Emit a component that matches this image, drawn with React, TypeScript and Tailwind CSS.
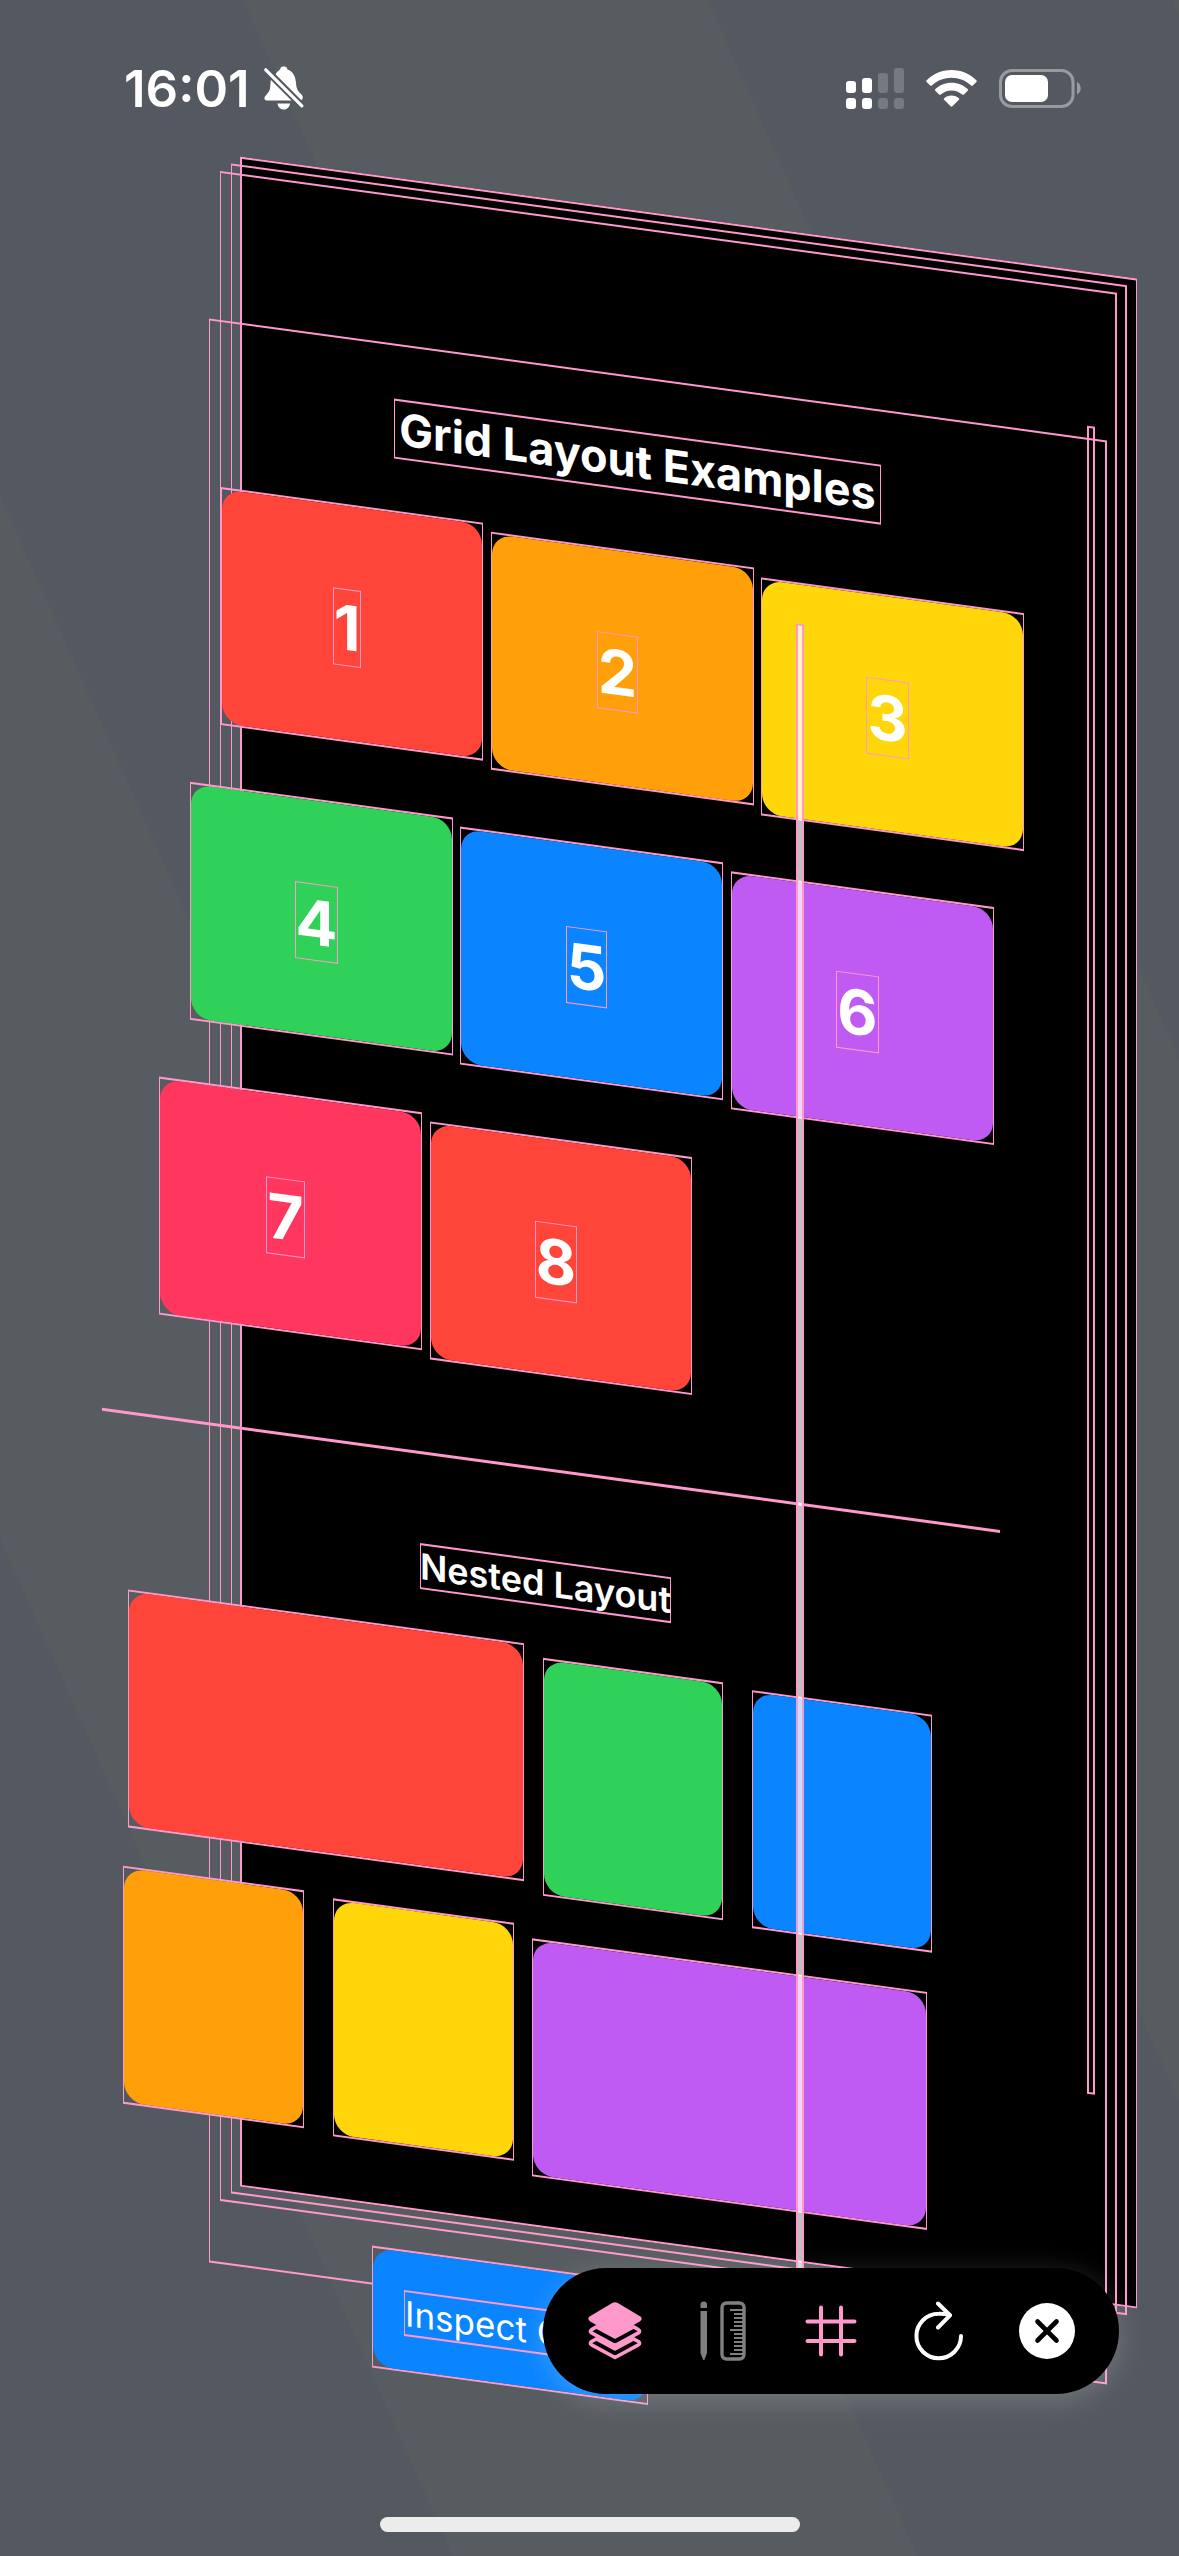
import React from "react";

type Box = { x: number; y: number; w: number; h: number };

const at = ({ x, y, w, h }: Box): React.CSSProperties => ({ left: x, top: y, width: w, height: h });

const frames: Box[] = [
  { x: 231, y: 132, w: 896, h: 2030 },
  { x: 220, y: 141, w: 897, h: 2030 },
  { x: 209, y: 290, w: 898, h: 1944 },
];

const numbered: (Box & { label: string; fill: string })[] = [
  { label: "1", x: 221, y: 457, w: 262, h: 238, fill: "bg-[#ff453a]" },
  { label: "2", x: 491, y: 465, w: 263, h: 238, fill: "bg-[#ff9f0a]" },
  { label: "3", x: 761, y: 474, w: 263, h: 238, fill: "bg-[#ffd60a]" },
  { label: "4", x: 190, y: 756, w: 263, h: 238, fill: "bg-[#30d158]" },
  { label: "5", x: 460, y: 764, w: 263, h: 238, fill: "bg-[#0a84ff]" },
  { label: "6", x: 731, y: 772, w: 263, h: 238, fill: "bg-[#bf5af2]" },
  { label: "7", x: 159, y: 1055, w: 263, h: 238, fill: "bg-[#ff375f]" },
  { label: "8", x: 430, y: 1063, w: 262, h: 238, fill: "bg-[#ff453a]" },
];

const nested: (Box & { fill: string })[] = [
  { x: 128, y: 1572, w: 396, h: 238, fill: "bg-[#ff453a]" },
  { x: 543, y: 1584, w: 180, h: 238, fill: "bg-[#30d158]" },
  { x: 752, y: 1588, w: 180, h: 238, fill: "bg-[#0a84ff]" },
  { x: 123, y: 1849, w: 181, h: 238, fill: "bg-[#ff9f0a]" },
  { x: 333, y: 1853, w: 181, h: 238, fill: "bg-[#ffd60a]" },
  { x: 532, y: 1866, w: 395, h: 238, fill: "bg-[#bf5af2]" },
];

function Tile({ box, fill, label }: { box: Box; fill: string; label?: string }) {
  return (
    <div className="absolute border border-y-2 border-[#ff99cc]" style={at(box)}>
      <div className={`flex h-full items-center justify-center rounded-[20px] pt-2 pr-2.5 ${fill}`}>
        {label && (
          <span className="border border-[#ff99cc] text-[62px] leading-[75px] font-bold">{label}</span>
        )}
      </div>
    </div>
  );
}

function Scene() {
  return (
    <main className="absolute inset-0 origin-top-left skew-y-[7.74deg]">
      <div className="absolute border-2 border-r border-[#ff99cc] bg-black" style={at({ x: 240, y: 124, w: 897, h: 2030 })} />
      {frames.map((f) => (
        <div key={f.x} className="absolute border-2 border-l border-[#ff99cc]" style={at(f)} />
      ))}
      <div className="absolute border-2 border-[#ff99cc]" style={at({ x: 1087, y: 278, w: 8, h: 1668 })} />

      <h1
        className="absolute flex items-center justify-center border border-y-2 border-[#ff99cc] text-[45px] font-bold whitespace-nowrap"
        style={at({ x: 394, y: 345, w: 487, h: 60 })}
      >
        Grid Layout Examples
      </h1>
      {numbered.map((n) => (
        <Tile key={n.label} box={n} fill={n.fill} label={n.label} />
      ))}

      <div className="absolute bg-[#ff99cc]" style={at({ x: 102, y: 1394, w: 898, h: 3 })} />

      <h2
        className="absolute flex items-center justify-center border border-y-2 border-[#ff99cc] text-[36px] font-semibold whitespace-nowrap"
        style={at({ x: 420, y: 1486, w: 251, h: 46 })}
      >
        Nested Layout
      </h2>
      {nested.map((n) => (
        <Tile key={`${n.x}-${n.y}`} box={n} fill={n.fill} />
      ))}

      <button className="absolute border border-y-2 border-[#ff99cc]" style={at({ x: 372, y: 2195, w: 276, h: 122 })}>
        <span className="flex h-full items-center rounded-[20px] bg-[#0a84ff] pt-1 pl-[31px]">
          <span className="border border-y-2 border-[#ff99cc] text-[35px] leading-[42px] whitespace-nowrap">Inspect Grid</span>
        </span>
      </button>

      <div className="absolute border-2 border-[#ff99cc] bg-white/75" style={at({ x: 796, y: 515, w: 8, h: 1686 })} />
    </main>
  );
}

function BellOff() {
  return (
    <svg width="40" height="44" viewBox="0 0 40 44" fill="#fff" aria-hidden="true">
      <path d="M11.500 8.500 C13 5.500 15 4.500 16 3.500 C16.500 1 18 0.500 19.500 0.500 C21.500 0.500 23 1 23.500 3.500 C29 5.500 31.500 10 32 17 C32.500 23.500 34 25 37.500 28.500 C39 30 39.300 32 38 33.500 L37 34.200 Z" />
      <path d="M6.800 13.500 L28.500 34.500 L3 34.500 C0 34.500 -0.200 31.500 1.500 29.800 C4.500 26.500 6 25 6.300 20 Z" />
      <path d="M13.500 37.500 H26 C25.500 41.500 22.500 43.500 19.700 43.500 C17 43.500 14 41.500 13.500 37.500 Z" />
      <path d="M2 4 L38 40" stroke="#545860" strokeWidth="7" />
      <path d="M1.800 3.800 L37.800 39.800" stroke="#fff" strokeWidth="3.200" strokeLinecap="round" />
    </svg>
  );
}

function Signal() {
  return (
    <svg width="58" height="41" viewBox="0 0 58 41" fill="#fff" aria-hidden="true">
      <rect x="0" y="13" width="10" height="12" rx="3" />
      <rect x="16" y="10" width="10" height="15" rx="3" />
      <rect x="0" y="30" width="10" height="11" rx="3" />
      <rect x="16" y="30" width="10" height="11" rx="3" />
      <g opacity="0.2">
        <rect x="32" y="5" width="10" height="20" rx="3" />
        <rect x="48" y="0" width="10" height="25" rx="3" />
        <rect x="32" y="30" width="10" height="11" rx="3" />
        <rect x="48" y="30" width="10" height="11" rx="3" />
      </g>
    </svg>
  );
}

function Wifi() {
  return (
    <svg width="51" height="37" viewBox="0 0 51 37" fill="#fff" aria-hidden="true">
      <path d="M25.500 0 C35.500 0 44 4 50.300 10.200 C50.900 10.800 50.900 11.400 50.400 11.900 L46.800 15.500 C46.300 16 45.600 16 45.100 15.500 C39.800 10.600 33 7.800 25.500 7.800 C18 7.800 11.200 10.600 5.900 15.500 C5.400 16 4.700 16 4.200 15.500 L0.600 11.900 C0.100 11.400 0.100 10.800 0.700 10.200 C7 4 15.500 0 25.500 0 Z" />
      <path d="M25.500 12.800 C31.900 12.800 37.500 15.200 41.600 19.100 C42.200 19.700 42.200 20.300 41.700 20.800 L37.900 24.500 C37.400 25 36.800 25 36.300 24.600 C33.300 21.900 29.600 20.400 25.500 20.400 C21.400 20.400 17.700 21.900 14.700 24.600 C14.200 25 13.600 25 13.100 24.500 L9.300 20.800 C8.800 20.300 8.800 19.700 9.400 19.100 C13.500 15.200 19.100 12.800 25.500 12.800 Z" />
      <path d="M25.500 25.500 C28.300 25.500 30.800 26.500 32.800 28.200 C33.400 28.700 33.400 29.300 32.900 29.800 L26.400 36.200 C25.800 36.800 25.200 36.800 24.600 36.200 L18.100 29.800 C17.600 29.300 17.600 28.700 18.200 28.200 C20.200 26.500 22.700 25.500 25.500 25.500 Z" />
    </svg>
  );
}

function Battery() {
  return (
    <svg width="82" height="39" viewBox="0 0 82 39" aria-hidden="true">
      <rect x="1.500" y="1.500" width="72.500" height="36" rx="11.500" fill="none" stroke="#fff" strokeOpacity="0.4" strokeWidth="3" />
      <path d="M78 13 C83 15.500 83 23 78 25.500 Z" fill="#fff" fillOpacity="0.4" />
      <rect x="6" y="6" width="43" height="27" rx="7" fill="#fff" />
    </svg>
  );
}

function LayersIcon() {
  return (
    <svg width="54" height="58" viewBox="0 0 54 58" aria-hidden="true">
      <g fill="none" stroke="#ff99cc" strokeWidth="3.600" strokeLinejoin="round">
        <path d="M27 55.500 L3.600 42.800 Q1.200 41.200 3.600 39.500 L8.500 36.800 L27 47 L45.500 36.800 L50.400 39.500 Q52.800 41.200 50.400 42.800 Z" />
        <path d="M27 43.600 L3.600 30.900 Q1.200 29.300 3.600 27.600 L8.500 24.800 L27 35 L45.500 24.800 L50.400 27.600 Q52.800 29.300 50.400 30.900 Z" fill="#000" />
      </g>
      <path d="M24.200 1 Q27 -0.500 29.800 1 L52 14.200 Q55.500 16.700 52 19.200 L29.800 32.400 Q27 34 24.200 32.400 L2 19.200 Q-1.500 16.700 2 14.200 Z" fill="#ff99cc" />
    </svg>
  );
}

function PencilRulerIcon() {
  const ticks = [8, 12, 16, 20, 24, 28, 32, 36, 40, 44, 48, 52];
  return (
    <svg width="46" height="60" viewBox="0 0 46 60" fill="#808080" aria-hidden="true">
      <path d="M0.500 7 V3.500 Q0.500 0.500 3.800 0.500 Q7 0.500 7 3.500 V7 Z" />
      <path d="M0.500 10 H7 V52 L4.500 58.500 Q3.800 60 3 58.500 L0.500 52 Z" />
      <rect x="22" y="2" width="22" height="56" rx="4.500" fill="none" stroke="#808080" strokeWidth="3.400" />
      {ticks.map((y, i) => (
        <rect key={y} x={i === 0 || i === 5 || i === 11 ? 30 : 34} y={y} width={i === 0 || i === 5 || i === 11 ? 13 : 9} height="2" />
      ))}
    </svg>
  );
}

function GridIcon() {
  return (
    <svg width="52" height="52" viewBox="0 0 52 52" stroke="#ff99cc" strokeWidth="4" strokeLinecap="round" aria-hidden="true">
      <path d="M16 2.500 V49.500 M36 2.500 V49.500 M2.500 16.500 H49.500 M2.500 36 H49.500" />
    </svg>
  );
}

function RotateIcon() {
  return (
    <svg width="50" height="60" viewBox="0 0 50 60" fill="none" stroke="#fff" strokeWidth="4" strokeLinecap="round" strokeLinejoin="round" aria-hidden="true">
      <path d="M47 35 A22.300 22.300 0 1 1 24.700 12.700 Q30 12.500 35.500 14" />
      <path d="M24 2.500 L36 14.300 L24 26.500" />
    </svg>
  );
}

function CloseIcon() {
  return (
    <svg width="56" height="56" viewBox="0 0 56 56" aria-hidden="true">
      <circle cx="28" cy="28" r="28" fill="#fff" />
      <path d="M18.500 18.500 L37.500 37.500 M37.500 18.500 L18.500 37.500" stroke="#000" strokeWidth="4.600" strokeLinecap="round" />
    </svg>
  );
}

const tools = [
  { name: "Layers", Icon: LayersIcon },
  { name: "Measurements", Icon: PencilRulerIcon },
  { name: "Grid", Icon: GridIcon },
  { name: "Reset", Icon: RotateIcon },
  { name: "Close", Icon: CloseIcon },
];

export default function App() {
  return (
    <div className="relative flex min-h-screen w-full flex-col overflow-hidden bg-[repeating-linear-gradient(66deg,#545860_0px,#545860_413px,#575c60_415px,#575c60_837px,#545860_839px,#545860_848px)] font-['Inter',sans-serif] text-white">
      <Scene />

      <header className="relative flex h-[176px] items-center justify-between pr-[98px] pl-[124px]">
        <div className="flex items-center gap-[14px]">
          <time className="text-[51px] leading-none font-semibold">16:01</time>
          <BellOff />
        </div>
        <div className="flex items-center gap-[22px]">
          <Signal />
          <Wifi />
          <Battery />
        </div>
      </header>

      <footer className="relative mt-auto flex flex-col">
        <nav className="mr-[60px] flex h-[126px] items-center self-end rounded-full bg-black px-[18px] shadow-[0_6px_30px_rgba(255,255,255,0.18)]">
          {tools.map(({ name, Icon }) => (
            <button key={name} aria-label={name} className="flex h-full w-[108px] items-center justify-center">
              <Icon />
            </button>
          ))}
        </nav>
        <div className="mt-[123px] mb-6 h-[15px] w-[420px] self-center rounded-full bg-[#ececec]" />
      </footer>
    </div>
  );
}
